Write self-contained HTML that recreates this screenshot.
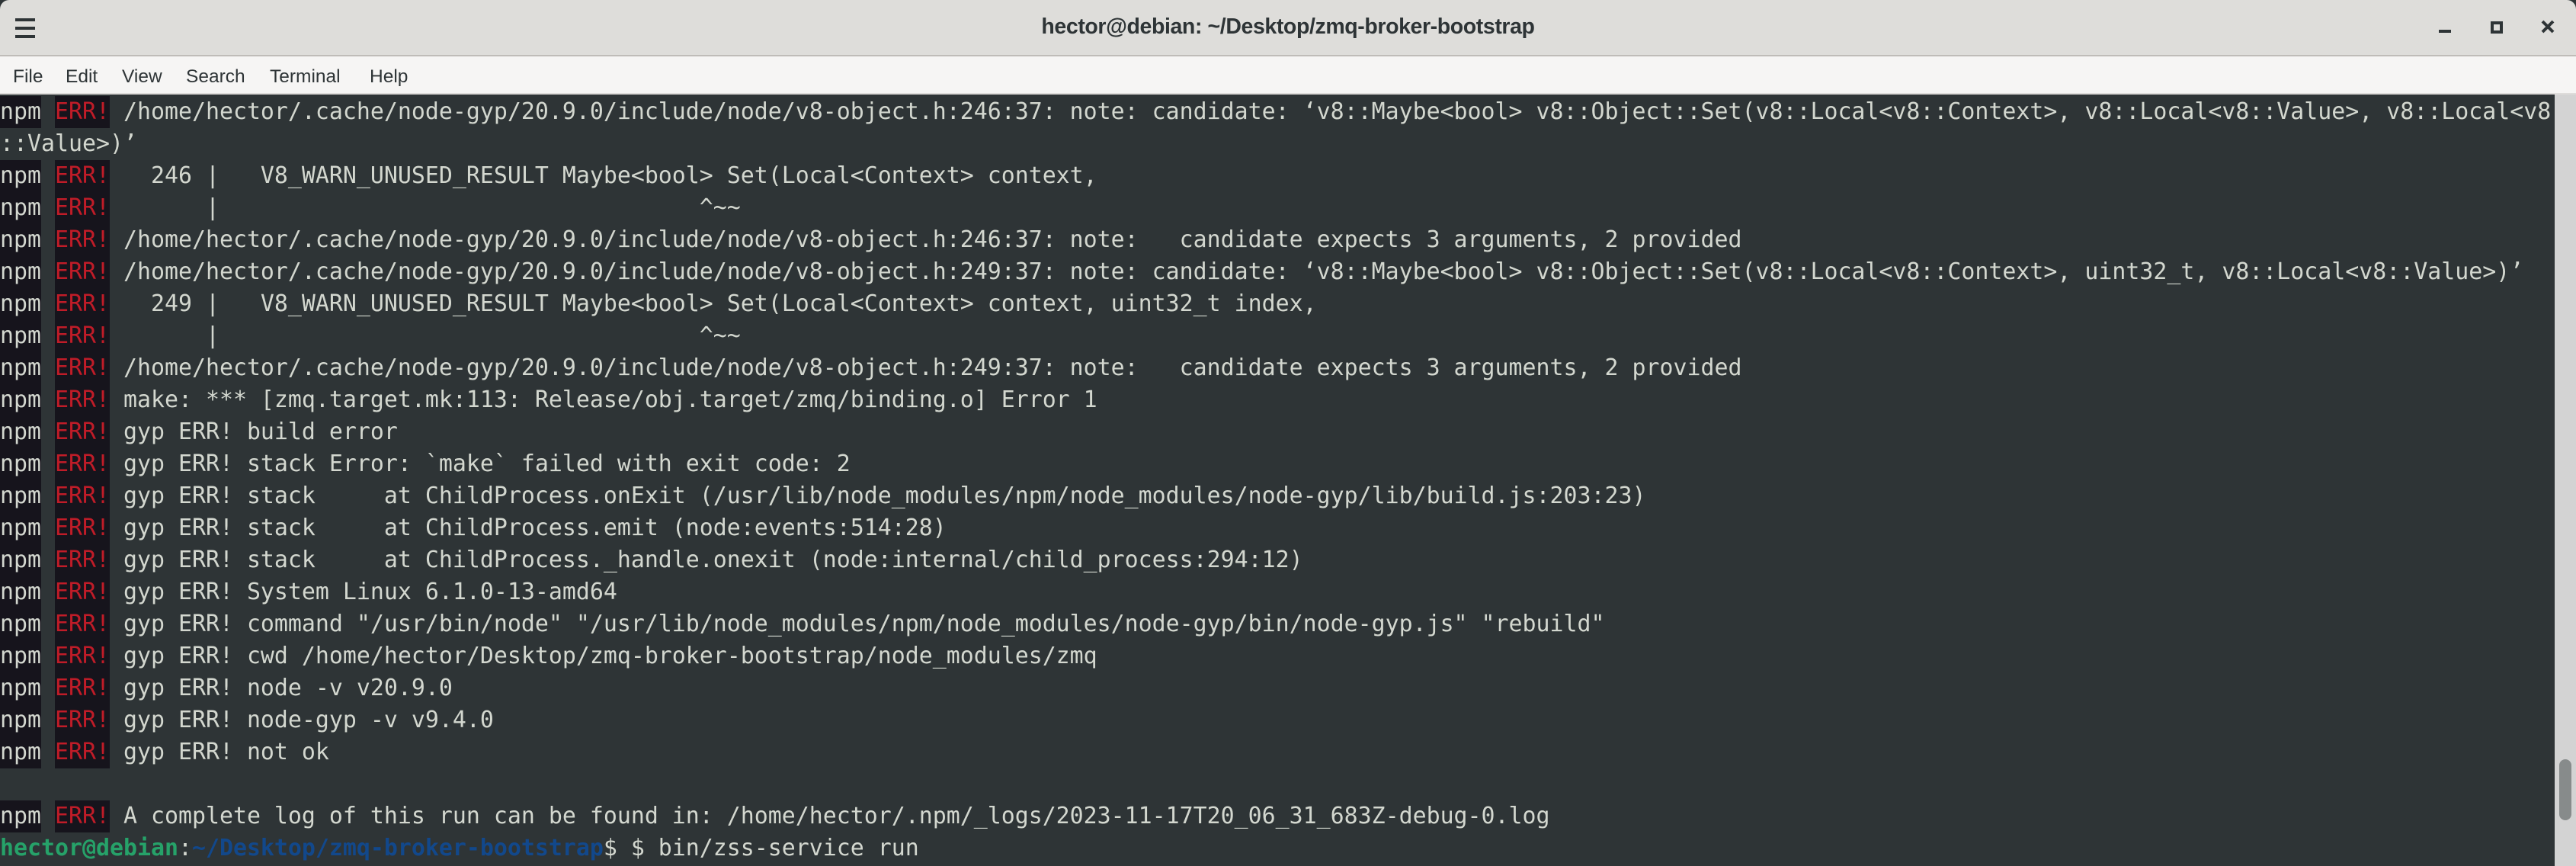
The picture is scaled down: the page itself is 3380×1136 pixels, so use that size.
<!DOCTYPE html>
<html><head><meta charset="utf-8"><style>
*{margin:0;padding:0;box-sizing:border-box}
body{width:3380px;height:1136px;overflow:hidden;background:#2e3436;position:relative;font-family:"Liberation Sans",sans-serif}
#title{position:absolute;left:0;top:0;width:3380px;height:74px;background:#deddda;border-bottom:2px solid #bfbcb8;border-radius:12px 12px 0 0}
#title .t{position:absolute;left:0;right:0;top:19px;text-align:center;font-weight:bold;font-size:28.5px;color:#2e3436;letter-spacing:-0.4px}
#menu{position:absolute;left:0;top:74px;width:3380px;height:50px;background:#f6f5f4;border-bottom:2px solid #dedcda}
#menu span{position:absolute;top:13px;font-size:24.5px;color:#2e3436}
#term{position:absolute;left:0;top:126px;width:3352px;font-family:"DejaVu Sans Mono","Liberation Mono",monospace;font-size:29.9px;line-height:42px;color:#d3d7cf;white-space:pre}
.n{background:#16141c;color:#d3d7cf;display:inline-block;height:42px}
.e{background:#16141c;color:#c01c28;display:inline-block;height:42px}
.g{color:#26a269;font-weight:bold}.b{color:#12488b;font-weight:bold}
#sb{position:absolute;left:3352px;top:124px;width:28px;height:1012px;background:#d3d3d3}
#th{position:absolute;left:3358px;top:996px;width:16px;height:80px;border-radius:8px;background:#878b8b}
</style></head><body>
<div id="title">
<svg style="position:absolute;left:20px;top:24px" width="26" height="26"><rect x="0" y="0" width="26" height="4" fill="#2e3436"/><rect x="0" y="11" width="26" height="4" fill="#2e3436"/><rect x="0" y="22" width="26" height="4" fill="#2e3436"/></svg>
<div class="t">hector@debian: ~/Desktop/zmq-broker-bootstrap</div>
<svg style="position:absolute;left:3200px;top:26px" width="20" height="22"><rect x="0" y="13" width="16" height="4" fill="#2e3436"/></svg>
<svg style="position:absolute;left:3268px;top:28px" width="20" height="20"><rect x="2" y="2" width="12" height="12" fill="none" stroke="#2e3436" stroke-width="4"/></svg>
<svg style="position:absolute;left:3334px;top:26px" width="20" height="20"><path d="M2 2L16 16M16 2L2 16" stroke="#2e3436" stroke-width="4"/></svg>
</div>
<div id="menu"><span style="left:17px">File</span><span style="left:86px">Edit</span><span style="left:160px">View</span><span style="left:244px">Search</span><span style="left:354px">Terminal</span><span style="left:485px">Help</span></div>
<div id="term"><span class="n">npm</span> <span class="e">ERR!</span> /home/hector/.cache/node-gyp/20.9.0/include/node/v8-object.h:246:37: note: candidate: ‘v8::Maybe&lt;bool&gt; v8::Object::Set(v8::Local&lt;v8::Context&gt;, v8::Local&lt;v8::Value&gt;, v8::Local&lt;v8
::Value&gt;)’
<span class="n">npm</span> <span class="e">ERR!</span>   246 |   V8_WARN_UNUSED_RESULT Maybe&lt;bool&gt; Set(Local&lt;Context&gt; context,
<span class="n">npm</span> <span class="e">ERR!</span>       |                                   ^~~
<span class="n">npm</span> <span class="e">ERR!</span> /home/hector/.cache/node-gyp/20.9.0/include/node/v8-object.h:246:37: note:   candidate expects 3 arguments, 2 provided
<span class="n">npm</span> <span class="e">ERR!</span> /home/hector/.cache/node-gyp/20.9.0/include/node/v8-object.h:249:37: note: candidate: ‘v8::Maybe&lt;bool&gt; v8::Object::Set(v8::Local&lt;v8::Context&gt;, uint32_t, v8::Local&lt;v8::Value&gt;)’
<span class="n">npm</span> <span class="e">ERR!</span>   249 |   V8_WARN_UNUSED_RESULT Maybe&lt;bool&gt; Set(Local&lt;Context&gt; context, uint32_t index,
<span class="n">npm</span> <span class="e">ERR!</span>       |                                   ^~~
<span class="n">npm</span> <span class="e">ERR!</span> /home/hector/.cache/node-gyp/20.9.0/include/node/v8-object.h:249:37: note:   candidate expects 3 arguments, 2 provided
<span class="n">npm</span> <span class="e">ERR!</span> make: *** [zmq.target.mk:113: Release/obj.target/zmq/binding.o] Error 1
<span class="n">npm</span> <span class="e">ERR!</span> gyp ERR! build error
<span class="n">npm</span> <span class="e">ERR!</span> gyp ERR! stack Error: `make` failed with exit code: 2
<span class="n">npm</span> <span class="e">ERR!</span> gyp ERR! stack     at ChildProcess.onExit (/usr/lib/node_modules/npm/node_modules/node-gyp/lib/build.js:203:23)
<span class="n">npm</span> <span class="e">ERR!</span> gyp ERR! stack     at ChildProcess.emit (node:events:514:28)
<span class="n">npm</span> <span class="e">ERR!</span> gyp ERR! stack     at ChildProcess._handle.onexit (node:internal/child_process:294:12)
<span class="n">npm</span> <span class="e">ERR!</span> gyp ERR! System Linux 6.1.0-13-amd64
<span class="n">npm</span> <span class="e">ERR!</span> gyp ERR! command "/usr/bin/node" "/usr/lib/node_modules/npm/node_modules/node-gyp/bin/node-gyp.js" "rebuild"
<span class="n">npm</span> <span class="e">ERR!</span> gyp ERR! cwd /home/hector/Desktop/zmq-broker-bootstrap/node_modules/zmq
<span class="n">npm</span> <span class="e">ERR!</span> gyp ERR! node -v v20.9.0
<span class="n">npm</span> <span class="e">ERR!</span> gyp ERR! node-gyp -v v9.4.0
<span class="n">npm</span> <span class="e">ERR!</span> gyp ERR! not ok

<span class="n">npm</span> <span class="e">ERR!</span> A complete log of this run can be found in: /home/hector/.npm/_logs/2023-11-17T20_06_31_683Z-debug-0.log
<span class="g">hector@debian</span>:<span class="b">~/Desktop/zmq-broker-bootstrap</span>$ $ bin/zss-service run</div>
<div id="sb"></div><div id="th"></div>
</body></html>
